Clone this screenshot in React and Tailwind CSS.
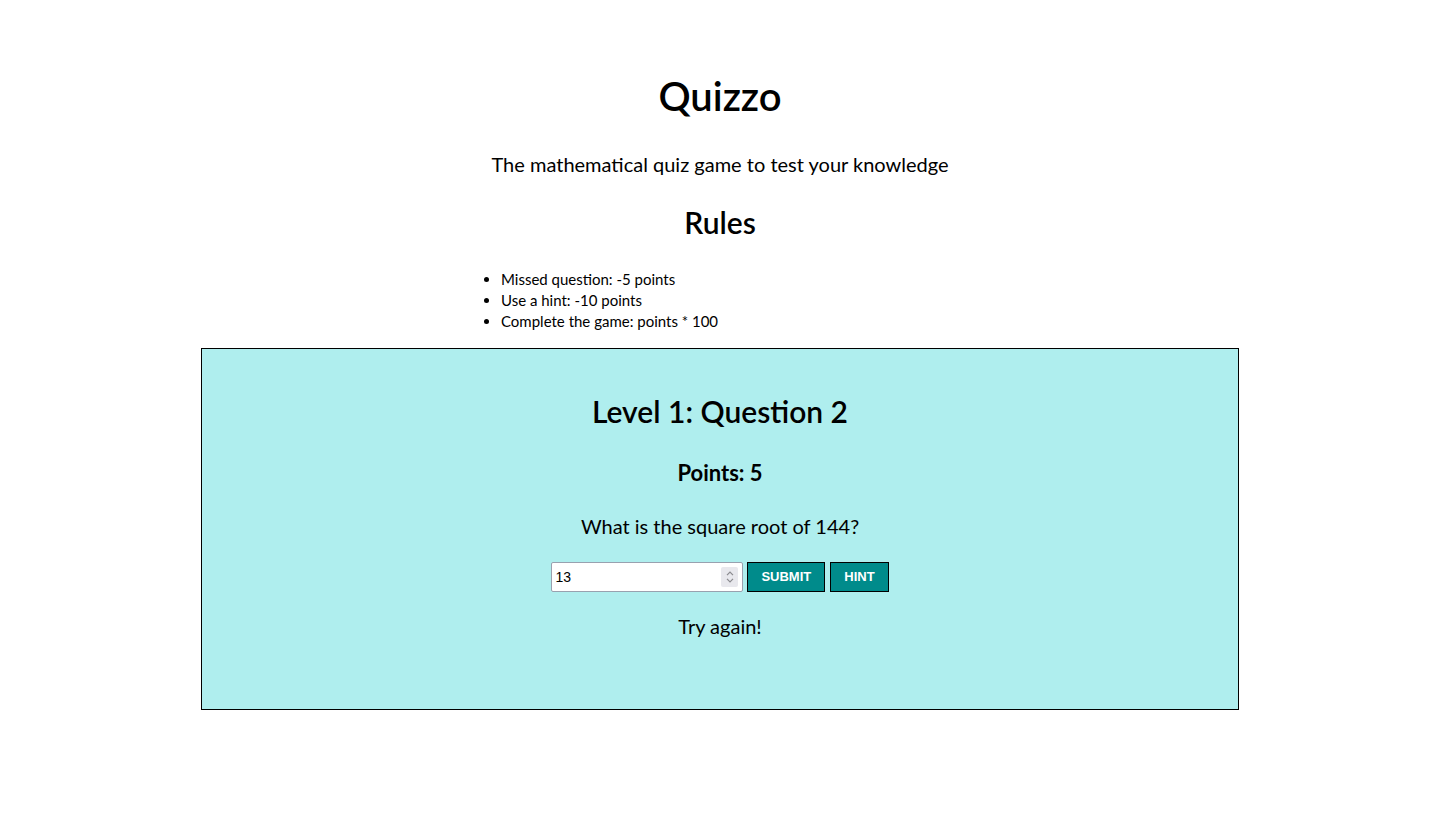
import React, { useState } from 'react';

const rules = ['Missed question: -5 points', 'Use a hint: -10 points', 'Complete the game: points * 100'];

const App = () => {
  const [answer, setAnswer] = useState('13');

  return (
    <div className="min-h-screen bg-white text-black font-['Lato','Open_Sans',sans-serif]">
      <div className="flex flex-col items-center pt-[70px]">
        <h1 className="text-[40px] leading-[52px] font-semibold">Quizzo</h1>
        <p className="mt-[28px] text-[20px] leading-[28px]">The mathematical quiz game to test your knowledge</p>
        <h2 className="mt-[24px] text-[30px] leading-[40px] font-semibold">Rules</h2>
        <ul className="mt-[27px] w-[480px] list-disc pl-[21px] text-[15px] leading-[21px]">
          {rules.map((rule) => (
            <li key={rule}>{rule}</li>
          ))}
        </ul>
      </div>

      {/* question card */}
      <div className="mx-auto mt-[16px] w-[1038px] h-[362px] border border-black bg-[#afeeee] flex flex-col items-center pt-[42px]">
        <h2 className="text-[30px] leading-[40px] font-semibold">Level 1: Question 2</h2>
        <h3 className="mt-[27px] text-[22px] leading-[30px] font-bold">Points: 5</h3>
        <p className="mt-[24px] text-[20px] leading-[28px]">What is the square root of 144?</p>
        <div className="mt-[22px] flex items-center gap-[4px]">
          <div className="relative">
            <input
              type="number"
              value={answer}
              onChange={(e) => setAnswer(e.target.value)}
              className="w-[192px] h-[30px] bg-white border border-gray-400 rounded-[2px] px-[3px] text-[14px] font-['Liberation_Sans',sans-serif] [appearance:textfield] [&::-webkit-inner-spin-button]:appearance-none"
            />
            {/* spinner */}
            <div className="absolute right-[5px] top-[5px] w-[17px] h-[20px] bg-[#e8e8ed] rounded-[2px] flex flex-col items-center justify-center gap-[2px] pointer-events-none">
              <svg width="8" height="5" viewBox="0 0 8 5" fill="none" stroke="#8a8a8e" strokeWidth="1.2">
                <path d="M1 4.2 4 1.2 7 4.2" />
              </svg>
              <svg width="8" height="5" viewBox="0 0 8 5" fill="none" stroke="#8a8a8e" strokeWidth="1.2">
                <path d="M1 0.8 4 3.8 7 0.8" />
              </svg>
            </div>
          </div>
          <button className="h-[30px] px-[13px] bg-[#008b8b] border border-black text-white text-[13px] font-bold font-['Liberation_Sans',sans-serif]">
            SUBMIT
          </button>
          <button className="ml-[1px] h-[30px] px-[13px] bg-[#008b8b] border border-black text-white text-[13px] font-bold font-['Liberation_Sans',sans-serif]">
            HINT
          </button>
        </div>
        <p className="mt-[20px] text-[20px] leading-[28px]">Try again!</p>
      </div>
    </div>
  );
};

export default App;
